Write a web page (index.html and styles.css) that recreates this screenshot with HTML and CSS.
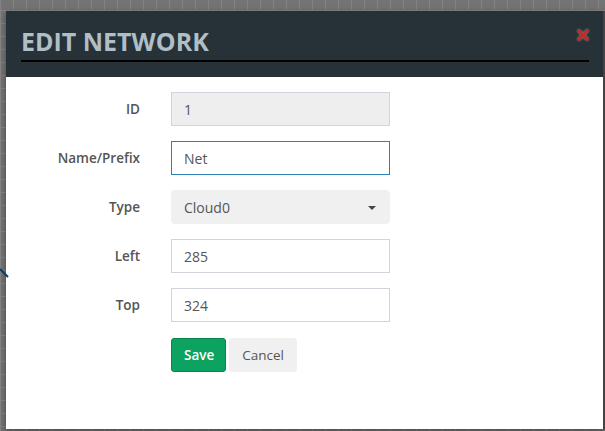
FILE: index.html
```html
<!DOCTYPE html>
<html>
<head>
<meta charset="utf-8">
<link rel="stylesheet" href="styles.css">
</head>
<body>
<div class="canvas">
  <svg class="wire" width="10" height="20" viewBox="0 0 10 20"><line x1="0" y1="4" x2="8" y2="12" stroke="#123c5a" stroke-width="2"/></svg>
  <div class="modal">
    <div class="modal-header">
      <h1 class="title">EDIT NETWORK</h1>
      <button class="close" aria-label="close">
        <svg width="12" height="12" viewBox="0 0 12 12"><path d="M2 2 L10 10 M10 2 L2 10" stroke="#c62828" stroke-width="2.8" stroke-linecap="square"/></svg>
      </button>
    </div>
    <form class="modal-body">
      <label class="lbl">ID</label>
      <div class="field readonly">1</div>
      <label class="lbl">Name/Prefix</label>
      <div class="field focus">Net</div>
      <label class="lbl">Type</label>
      <div class="field select">Cloud0<span class="caret"></span></div>
      <label class="lbl">Left</label>
      <div class="field">285</div>
      <label class="lbl">Top</label>
      <div class="field">324</div>
      <span></span>
      <div class="actions">
        <button type="button" class="btn save">Save</button>
        <button type="button" class="btn cancel">Cancel</button>
      </div>
    </form>
  </div>
</div>
</body>
</html>
```
FILE: styles.css
```css
html, body {
  margin: 0;
  padding: 0;
}
body {
  width: 605px;
  height: 431px;
  overflow: hidden;
  background-color: #737373;
  background-image:
    linear-gradient(to right, #838383 1px, transparent 1px),
    linear-gradient(to bottom, #838383 1px, transparent 1px);
  background-size: 13px 13px;
  background-position: 0 -3px;
  font-family: "Open Sans", "Noto Sans", sans-serif;
}
.canvas {
  position: relative;
  width: 605px;
  height: 431px;
  padding-top: 11px;
  box-sizing: border-box;
}
.wire {
  position: absolute;
  left: 0;
  top: 265px;
}
.modal {
  margin-left: 6px;
  width: 597px;
  height: 418px;
  background: #fff;
  border-right: 2px solid #444;
  box-shadow: 0 2px 6px rgba(0,0,0,0.4);
  display: flex;
  flex-direction: column;
}
.modal-header {
  background: #263238;
  height: 66px;
  box-sizing: border-box;
  padding: 15px 0 0 15px;
  position: relative;
}
.title {
  margin: 0;
  width: 568px;
  font-size: 25px;
  font-weight: 700;
  color: #b0bec5;
  line-height: 30px;
  padding-bottom: 4px;
  border-bottom: 2px solid #000;
}
.close {
  position: absolute;
  right: 14px;
  top: 18px;
  background: none;
  border: 0;
  padding: 0;
  width: 12px;
  height: 12px;
  filter: drop-shadow(0 0 1px #999);
}
.close svg { display: block; }
.modal-body {
  display: grid;
  grid-template-columns: 134px 219px;
  column-gap: 31px;
  row-gap: 15px;
  padding-top: 15px;
  align-items: center;
}
.lbl {
  text-align: right;
  font-size: 13.5px;
  font-weight: 600;
  color: #555;
}
.field {
  height: 34px;
  box-sizing: border-box;
  border: 1px solid #d3d3dc;
  background: #fff;
  padding: 0 12px;
  font-size: 14px;
  color: #555;
  display: flex;
  align-items: center;
}
.readonly {
  background: #eeeeee;
}
.focus {
  border-color: #2f80b3;
}
.select {
  background: #f0f0f0;
  border-color: #f0f0f0;
  border-radius: 4px;
  position: relative;
}
.caret {
  position: absolute;
  right: 13px;
  top: 15px;
  width: 0;
  height: 0;
  border-left: 4px solid transparent;
  border-right: 4px solid transparent;
  border-top: 4px solid #444;
}
.actions {
  display: flex;
  gap: 3px;
  margin-top: 1px;
}
.btn {
  height: 34px;
  box-sizing: border-box;
  font-family: "Open Sans", "Noto Sans", sans-serif;
  font-size: 13.5px;
  border-radius: 3px;
  padding: 0 12px;
  cursor: pointer;
}
.save {
  width: 55px;
  background: #0ca25f;
  border: 1px solid #08874d;
  color: #fff;
  font-weight: 600;
}
.cancel {
  width: 68px;
  background: #f0f0f0;
  border: 1px solid #f0f0f0;
  color: #555;
}
```
